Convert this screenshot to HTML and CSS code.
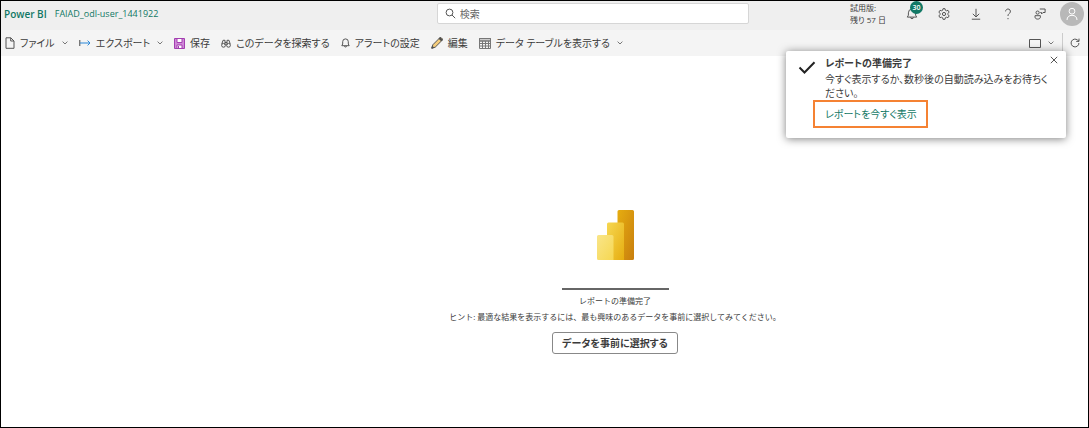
FILE: index.html
```html
<!DOCTYPE html>
<html lang="ja">
<head>
<meta charset="utf-8">
<title>Power BI</title>
<link rel="stylesheet" href="styles.css">
</head>
<body>
<div class="app">
  <header class="topbar">
    <div class="brand">
      <a class="brand-name" href="#">Power BI</a>
      <a class="workspace" href="#">FAIAD_odl-user_1441922</a>
    </div>
    <label class="search">
      <svg class="icon" width="11" height="11" viewBox="0 0 11 11"><circle cx="4.5" cy="4.5" r="3.4"/><path d="M7 7l3.2 3.2"/></svg>
      <input type="search" placeholder="検索" aria-label="検索">
    </label>
    <div class="tools">
      <div class="trial">試用版:<br>残り 57 日</div>
      <button class="tool bell" aria-label="通知">
        <svg class="icon" width="12" height="12" viewBox="0 0 12 12"><path d="M1.3 9.1h9.4L9.6 7.2V4.8a3.6 3.6 0 0 0-7.2 0v2.4zM4.6 9.3a1.4 1.4 0 0 0 2.8 0"/></svg>
        <span class="badge">30</span>
      </button>
      <button class="tool" aria-label="設定">
        <svg class="icon" width="12" height="12" viewBox="0 0 12 12"><path d="M5 .7h2l.4 1.6 1 .5L10 2.3l1.1 1.8L10 5.3v1.4l1.1 1.2L10 9.7l-1.6-.5-1 .5L7 11.3H5l-.4-1.600-1-.5L2 9.700.9 7.900 2 6.700V5.300L.9 4.100 2 2.300l1.600.5 1-.5z"/><circle cx="6" cy="6" r="1.600"/></svg>
      </button>
      <button class="tool" aria-label="ダウンロード">
        <svg class="icon" width="12" height="12" viewBox="0 0 12 12"><path d="M6 .8v8M2.800 5.800L6 9l3.200-3.200M1.800 11.200h8.400"/></svg>
      </button>
      <button class="tool" aria-label="ヘルプ">
        <svg class="icon" width="12" height="12" viewBox="0 0 12 12"><path d="M3.600 3.400a2.400 2.400 0 1 1 4 1.800C6.500 6.100 6 6.600 6 8"/><path d="M6 10v1.200"/></svg>
      </button>
      <button class="tool" aria-label="フィードバック">
        <svg class="icon" width="12" height="12" viewBox="0 0 12 12"><circle cx="3.600" cy="4.600" r="1.600"/><path d="M1 7.700h5.400v1.200c0 1.500-1.200 2.200-2.700 2.200S1 10.400 1 8.900zM5.800 1h5.300v3.500H9L7.500 6V4.500H6.300"/></svg>
      </button>
      <button class="avatar" aria-label="アカウント">
        <svg class="icon" width="14" height="14" viewBox="0 0 14 14"><circle cx="7" cy="4.200" r="2.900"/><path d="M2 13c0-3 2-4.700 5-4.700s5 1.700 5 4.700"/></svg>
      </button>
    </div>
  </header>

  <nav class="commands">
    <button class="cmd"><svg class="icon" width="10" height="12" viewBox="0 0 10 12"><path d="M1 .8h4.800L9 4v7.300H1zM5.700.8V4H9"/></svg>ファイル<svg class="icon chev" width="6" height="4" viewBox="0 0 6 4"><path d="M.6.6L3 3 5.400.6"/></svg></button>
    <button class="cmd"><svg class="icon export" width="12" height="8" viewBox="0 0 12 8"><path class="dark" d="M.8 1v6"/><path d="M1 4h10M8.600 1.600L11 4 8.600 6.400"/></svg>エクスポート<svg class="icon chev" width="6" height="4" viewBox="0 0 6 4"><path d="M.6.6L3 3 5.400.6"/></svg></button>
    <button class="cmd"><svg class="icon save" width="11" height="11" viewBox="0 0 11 11"><path class="body" d="M.5.5h10v10h-10z"/><path class="paper" d="M3 .5h5v4H3zM3 7h5v3.500H3z"/><path d="M4.500 8v2.500"/></svg>保存</button>
    <button class="cmd"><svg class="icon" width="10" height="9" viewBox="0 0 10 9"><circle cx="2.500" cy="6.300" r="1.900"/><circle cx="7.500" cy="6.300" r="1.900"/><path d="M.8 5L2 1.300h2V6M9.200 5L8 1.300H6V6M4 3.500h2"/></svg>このデータを探索する</button>
    <button class="cmd"><svg class="icon" width="9" height="10" viewBox="0 0 9 10"><path d="M.8 7.700h7.400L7.300 6V3.700a2.800 2.800 0 0 0-5.600 0V6zM3.500 8a1 1 0 0 0 2 0"/></svg>アラートの設定</button>
    <button class="cmd"><svg class="icon pencil" width="12" height="12" viewBox="0 0 12 12"><path d="M.8 11.200l1-3.400L8.700.9a1.200 1.200 0 0 1 1.700 0l.7.7a1.200 1.200 0 0 1 0 1.700l-6.900 6.900z"/><path class="tip" d="M.8 11.200l.6-2 1.400 1.400zM8 1.600L10.400 4l1-1L9.200.6z"/></svg>編集</button>
    <button class="cmd"><svg class="icon grid" width="12" height="11" viewBox="0 0 12 11"><path class="head" d="M.5.5h11V3H.5z"/><path d="M.5.5h11v10H.5zM.5 3h11M.5 5.500h11M.5 8h11M3.500 3v7.500M6.500 3v7.500M9.500 3v7.500"/></svg>データ テーブルを表示する<svg class="icon chev" width="6" height="4" viewBox="0 0 6 4"><path d="M.6.6L3 3 5.400.6"/></svg></button>
    <button class="cmd view" aria-label="表示"><svg class="icon" width="12" height="9" viewBox="0 0 12 9"><path d="M.5.5h11v8H.5z"/></svg><svg class="icon chev" width="6" height="4" viewBox="0 0 6 4"><path d="M.6.6L3 3 5.400.6"/></svg></button>
    <button class="cmd refresh" aria-label="更新"><svg class="icon" width="10" height="10" viewBox="0 0 10 10"><path d="M8.900 5A3.900 3.900 0 1 1 7.600 2.100L9 3.300M9 .6v2.800H6.200"/></svg></button>
  </nav>

  <main class="stage">
    <svg class="logo" width="38" height="51" viewBox="0 0 38 51">
      <defs>
        <linearGradient id="g1" x1="0" y1="0" x2="1" y2="1"><stop offset="0" stop-color="#e6ad10"/><stop offset="1" stop-color="#c87e0e"/></linearGradient>
        <linearGradient id="g2" x1="0" y1="0" x2="1" y2="1"><stop offset="0" stop-color="#f6d751"/><stop offset="1" stop-color="#e6ad10"/></linearGradient>
        <linearGradient id="g3" x1="0" y1="0" x2="1" y2="1"><stop offset="0" stop-color="#f9e589"/><stop offset="1" stop-color="#f6d751"/></linearGradient>
      </defs>
      <path fill="url(#g1)" d="M23 0h13.500a1.500 1.500 0 0 1 1.500 1.500v47a1.500 1.500 0 0 1-1.500 1.500H21.500V1.500A1.500 1.500 0 0 1 23 0z"/>
      <path fill="url(#g2)" d="M12.500 12.500h14a1.500 1.500 0 0 1 1.500 1.500v36H11V14a1.500 1.500 0 0 1 1.500-1.500z"/>
      <path fill="url(#g3)" d="M2.500 25H16a1.500 1.500 0 0 1 1.500 1.500V50h-15A1.500 1.500 0 0 1 1 48.500v-22A1.500 1.500 0 0 1 2.500 25z"/>
    </svg>
    <div class="progress"></div>
    <p class="status">レポートの準備完了</p>
    <p class="hint">ヒント: 最適な結果を表示するには、最も興味のあるデータを事前に選択してみてください。</p>
    <button class="select">データを事前に選択する</button>
  </main>

  <aside class="toast">
    <svg class="icon check" width="18" height="13" viewBox="0 0 18 13"><path d="M1.500 6.500l5 5L16.500 1.300"/></svg>
    <div class="toast-text">
      <h2>レポートの準備完了</h2>
      <p>今すぐ表示するか、数秒後の自動読み込みをお待ちください。</p>
      <a class="show" href="#">レポートを今すぐ表示</a>
    </div>
    <button class="close" aria-label="閉じる"><svg class="icon" width="8" height="8" viewBox="0 0 8 8"><path d="M.8.8l6.400 6.400M7.200.8L.8 7.200"/></svg></button>
  </aside>
</div>
</body>
</html>
```
FILE: styles.css
```css
* { box-sizing: border-box; }
body {
  margin: 0;
  color: #3b3b3b;
  font: 10px/14px "Open Sans", "Noto Sans CJK JP", sans-serif;
  font-feature-settings: "palt";
}
h2, p { margin: 0; }
a { color: #117865; text-decoration: none; }
button {
  border: 0;
  padding: 0;
  background: none;
  color: inherit;
  font: inherit;
  font-feature-settings: inherit;
}
.icon { flex: none; fill: none; stroke: #555; stroke-width: 1; }
.app {
  position: relative;
  display: flex;
  flex-direction: column;
  min-height: 100vh;
  border: 1px solid #000;
}
.topbar {
  display: grid;
  grid-template-columns: 40% minmax(0, 313px) 1fr;
  align-items: center;
  height: 29px;
  padding-bottom: 4px;
  background: #efefef;
}
.brand { display: flex; align-items: center; gap: 8px; padding-left: 3px; }
.brand-name { font-weight: 600; }
.workspace { font-size: 9px; }
.search {
  display: flex;
  align-items: center;
  gap: 4px;
  height: 21px;
  margin-left: 1px;
  padding: 0 7px;
  border: 1px solid #d6d6d6;
  border-radius: 2px;
  background: #fff;
}
.search input {
  flex: 1;
  min-width: 0;
  border: 0;
  padding: 0;
  background: none;
  font: inherit;
  outline: none;
}
.search input::placeholder { color: #666; }
.tools { display: flex; align-items: center; justify-content: flex-end; gap: 20px; padding-right: 4px; }
.trial { font-size: 8px; line-height: 12px; white-space: nowrap; }
.tool { position: relative; display: flex; }
.badge {
  position: absolute;
  left: 4px;
  top: -12px;
  width: 13px;
  height: 13px;
  border-radius: 50%;
  background: #117865;
  color: #fff;
  font-size: 7px;
  font-weight: 600;
  line-height: 13px;
  text-align: center;
}
.bell .badge { top: -7px; }
.avatar {
  display: flex;
  align-items: center;
  justify-content: center;
  width: 24px;
  height: 24px;
  margin-left: -6px;
  border-radius: 50%;
  background: #b8b8b8;
}
.avatar .icon { stroke: #fff; }
.commands {
  display: flex;
  align-items: center;
  gap: 11px;
  height: 26px;
  padding-left: 4px;
  background: #f4f4f4;
}
.cmd { display: flex; align-items: center; gap: 5px; white-space: nowrap; }
.cmd .chev { margin-left: 2px; stroke: #777; }
.cmd .export { stroke: #2b88d8; }
.cmd .dark { stroke: #444; }
.cmd .save { stroke: #a33fb0; }
.body { fill: #cf87d8; }
.paper { fill: #fff; }
.pencil { fill: #f5cd7c; }
.tip { fill: #444; }
.cmd .grid { stroke: #777; }
.head { fill: #ccc; }
.cmd.view { margin-left: auto; }
.refresh { height: 20px; margin-left: -3px; padding: 0 8px 0 7px; border-left: 1px solid #ccc; }
.stage {
  flex: 1;
  display: flex;
  flex-direction: column;
  align-items: center;
  padding: 154px 0 0 141px;
  background: #fff;
}
.progress { width: 107px; height: 2px; margin-top: 27px; background: #666; }
.status, .hint { font-size: 8px; line-height: 16px; font-feature-settings: normal; }
.status { margin-top: 3px; }
.select {
  min-width: 126px;
  height: 22px;
  margin-top: 7px;
  padding: 0 9px;
  border: 1px solid #888;
  border-radius: 3px;
  background: #fff;
  font-weight: 600;
}
.toast {
  position: absolute;
  top: 50px;
  right: 22px;
  display: flex;
  gap: 9px;
  width: 280px;
  padding: 5px 16px 10px 12px;
  border-radius: 2px;
  background: #fff;
  box-shadow: 0 1px 8px rgba(0, 0, 0, 0.5);
}
.check { margin-top: 5px; stroke: #222; stroke-width: 2; }
.toast h2 { font-size: 10px; font-weight: 600; line-height: 14px; }
.toast p { margin-top: 2px; }
.show {
  display: inline-block;
  margin-left: -12px;
  padding: 5px 9px 5px 10px;
  border: 2px solid #f58233;
}
.close { position: absolute; top: 5px; right: 8px; display: flex; }
```
